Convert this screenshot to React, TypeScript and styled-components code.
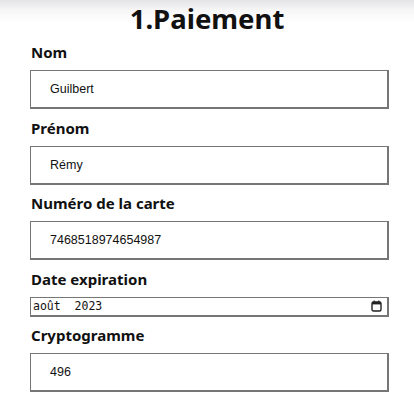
import React from "react";
import styled, { createGlobalStyle } from "styled-components";

// ------------------------------------------------
// Style
// ------------------------------------------------

const GlobalStyle = createGlobalStyle`
  html, body {
    margin: 0;
    padding: 0;
    background: #fff;
  }
  body {
    font-family: "Noto Sans", "Open Sans", sans-serif;
  }
`;

const Page = styled.div`
  background: linear-gradient(to bottom, #e4e4e6 0px, #f6f6f7 10px, #ffffff 22px);
  height: 407px;
  overflow: hidden;
`;

const Title = styled.h1`
  margin: 0;
  padding-top: 1px;
  text-align: center;
  font-size: 27.5px;
  line-height: 36px;
  font-weight: 700;
  color: #111;
`;

const Form = styled.form`
  display: flex;
  flex-direction: column;
  padding: 5px 25px 0 30px;
`;

const Field = styled.div`
  display: flex;
  flex-direction: column;
  gap: 8px;
  margin-bottom: 8.5px;
`;

const Label = styled.label`
  font-size: 15px;
  line-height: 20px;
  font-weight: 700;
  color: #111;
  padding-left: 1px;
`;

const TextInput = styled.input`
  box-sizing: border-box;
  height: 39px;
  width: 100%;
  margin: 0;
  padding: 0 0 0 19px;
  border-style: solid;
  border-color: #767676;
  border-width: 1px 2px 2px 1px;
  background: #fff;
  font-family: "Liberation Sans", Arial, sans-serif;
  font-size: 12.5px;
  color: #111;
  outline: none;
`;

const MonthBox = styled.div`
  box-sizing: border-box;
  height: 20px;
  display: flex;
  align-items: center;
  justify-content: space-between;
  padding: 0 5px 0 2px;
  border-style: solid;
  border-color: #767676;
  border-width: 1px 2px 2px 1px;
  font-family: "DejaVu Sans Mono", "Liberation Mono", monospace;
  font-size: 11.5px;
  color: #111;
  white-space: pre;
`;

const NextTitle = styled(Title)`
  margin-top: -2px;
`;

// ------------------------------------------------
// View
// ------------------------------------------------

const CalendarIcon = () => (
  <svg width="11" height="12" viewBox="0 0 11 12" fill="none">
    <rect x="1" y="2" width="9" height="9" rx="1.5" stroke="#222" strokeWidth="1.4" />
    <rect x="1" y="2" width="9" height="2.4" fill="#222" />
    <rect x="2.6" y="0.5" width="1.2" height="2" fill="#222" />
    <rect x="7.2" y="0.5" width="1.2" height="2" fill="#222" />
  </svg>
);

type TField = { id: string; label: string; value: string };

const fields: TField[] = [
  { id: "nom", label: "Nom", value: "Guilbert" },
  { id: "prenom", label: "Prénom", value: "Rémy" },
  { id: "carte", label: "Numéro de la carte", value: "7468518974654987" },
];

const App = () => {
  return (
    <Page>
      <GlobalStyle />
      <Title>1.Paiement</Title>
      <Form onSubmit={(e) => e.preventDefault()}>
        {fields.map((f) => (
          <Field key={f.id}>
            <Label htmlFor={f.id}>{f.label}</Label>
            <TextInput id={f.id} defaultValue={f.value} />
          </Field>
        ))}
        <Field>
          <Label>Date expiration</Label>
          <MonthBox>
            <span>août  2023</span>
            <CalendarIcon />
          </MonthBox>
        </Field>
        <Field>
          <Label htmlFor="crypto">Cryptogramme</Label>
          <TextInput id="crypto" defaultValue="496" />
        </Field>
      </Form>
      <NextTitle>2.Livraison</NextTitle>
    </Page>
  );
};

export default App;
